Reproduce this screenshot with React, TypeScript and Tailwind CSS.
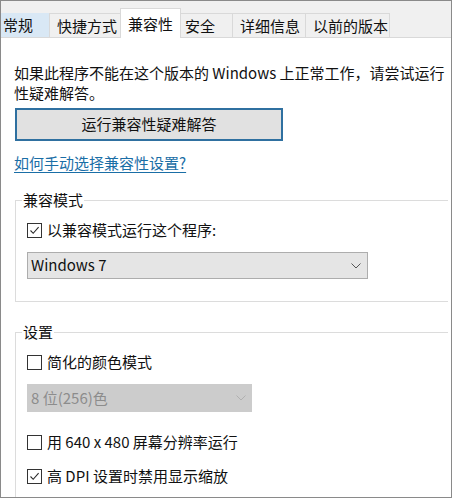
import type { ReactNode } from "react";

const font = { fontFamily: '"Noto Sans CJK SC", "Noto Sans", sans-serif' };

const tabs = [
  { label: "常规", cls: "w-[48px] pl-[2px] bg-[#d9e8f5]" },
  { label: "快捷方式", cls: "w-[71px] pl-[7px] border-l border-t border-[#d9d9d9]" },
  { label: "兼容性", cls: "w-[61px] pl-[7px]", active: true },
  { label: "安全", cls: "w-[51px] pl-[4px] border-t border-[#d9d9d9]" },
  { label: "详细信息", cls: "w-[73px] pl-[7px] border-l border-t border-[#d9d9d9]" },
  { label: "以前的版本", cls: "w-[85px] pl-[7px] border-l border-r border-t border-[#d9d9d9]" },
];

function Check({ checked, children }: { checked?: boolean; children: ReactNode }) {
  return (
    <label className="flex items-center h-[20px] gap-[5px]">
      <span className="w-[15px] h-[15px] border border-[#333333] bg-white flex items-center justify-center">
        {checked && (
          <svg width="11" height="11" viewBox="0 0 11 11" fill="none">
            <path d="M1.5 5.5 L4.2 8.3 L9.6 2.2" stroke="#2b2b2b" strokeWidth="1.1" />
          </svg>
        )}
      </span>
      <span>{children}</span>
    </label>
  );
}

function Chevron({ color }: { color: string }) {
  return (
    <svg width="10" height="6" viewBox="0 0 10 6" fill="none">
      <path d="M0.5 0.5 L5 5 L9.5 0.5" stroke={color} strokeWidth="1" />
    </svg>
  );
}

export default function App() {
  return (
    <div
      className="w-[452px] h-[498px] overflow-hidden border border-[#8a8a8a] bg-[#f0f0f0] flex flex-col text-[15px] text-[#111111]"
      style={font}
    >
      {/* 标签页 */}
      <div className="h-[36px] flex items-end shrink-0">
        {tabs.map((t) =>
          t.active ? (
            <div
              key={t.label}
              className={`${t.cls} relative z-10 h-[30px] mb-[-1px] bg-white border-x border-t border-[#d9d9d9] leading-[28px] pt-[1px]`}
            >
              {t.label}
            </div>
          ) : (
            <div key={t.label} className={`${t.cls} h-[24px] leading-[24px]`}>
              {t.label}
            </div>
          )
        )}
      </div>

      {/* 内容 */}
      <div className="flex-1 bg-white border-t border-[#d9d9d9] pl-[13px] pt-[25px]">
        <div className="leading-[20px] whitespace-nowrap">
          <div>如果此程序不能在这个版本的 Windows 上正常工作，请尝试运行</div>
          <div>性疑难解答。</div>
        </div>

        <button className="ml-[1px] mt-[5px] w-[268px] h-[33px] bg-[#e1e1e1] border-2 border-[#2f70a0] text-center">
          运行兼容性疑难解答
        </button>

        <div className="mt-[12px] leading-[20px]">
          <a className="text-[#1a6ea6] underline underline-offset-[3px] decoration-[#1a6ea6]">
            如何手动选择兼容性设置?
          </a>
        </div>

        {/* 兼容模式 */}
        <fieldset className="ml-[1px] mt-[17px] w-[433px] border-l border-t border-b border-[#dcdcdc] pl-[6px] pb-[22px]">
          <legend className="px-[1px] leading-[20px]">兼容模式</legend>
          <div className="pl-[5px]">
            <div className="mt-[10px]">
              <Check checked>以兼容模式运行这个程序:</Check>
            </div>
            <div className="mt-[12px] w-[341px] h-[27px] bg-[#e5e5e5] border border-[#adadad] flex items-center justify-between pl-[3px] pr-[6px]">
              <span>Windows 7</span>
              <Chevron color="#555555" />
            </div>
          </div>
        </fieldset>

        {/* 设置 */}
        <fieldset className="ml-[1px] mt-[20px] w-[433px] border-l border-t border-[#dcdcdc] pl-[6px] pb-[40px]">
          <legend className="px-[1px] leading-[20px]">设置</legend>
          <div className="pl-[5px]">
            <div className="mt-[10px]">
              <Check>简化的颜色模式</Check>
            </div>
            <div className="mt-[12px] w-[225px] h-[28px] bg-[#cccccc] flex items-center justify-between pl-[4px] pr-[6px] text-[#8c8c8c]">
              <span>8 位(256)色</span>
              <Chevron color="#b0b0b0" />
            </div>
            <div className="mt-[20px]">
              <Check>用 640 x 480 屏幕分辨率运行</Check>
            </div>
            <div className="mt-[14px]">
              <Check checked>高 DPI 设置时禁用显示缩放</Check>
            </div>
          </div>
        </fieldset>
      </div>
    </div>
  );
}
